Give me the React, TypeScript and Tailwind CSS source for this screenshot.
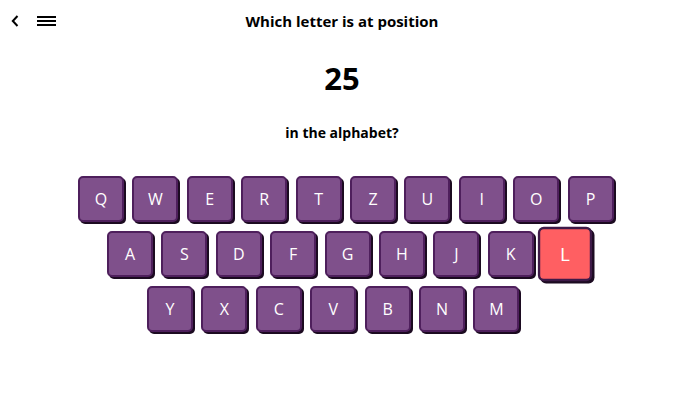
import React from "react";

const rows: { keys: string[]; ml: string }[] = [
  { keys: ["Q", "W", "E", "R", "T", "Z", "U", "I", "O", "P"], ml: "ml-[78px]" },
  { keys: ["A", "S", "D", "F", "G", "H", "J", "K", "L"], ml: "ml-[107px]" },
  { keys: ["Y", "X", "C", "V", "B", "N", "M"], ml: "ml-[147px]" },
];

function Key({ k }: { k: string }) {
  const active = k === "L";
  return (
    <div
      className={
        active
          ? "w-[46px] h-[46px] rounded-[5px] border-2 border-[#3e1a48] bg-[#ff5f62] shadow-[2px_2px_0_#1c0b21] flex items-center justify-center text-white text-[16px] scale-[1.18] relative z-10"
          : "w-[46px] h-[46px] rounded-[5px] border-2 border-[#4e1f5c] bg-[#7f508b] shadow-[2px_2px_0_#1c0b21] flex items-center justify-center text-white text-[16px]"
      }
    >
      {k}
    </div>
  );
}

export default function App() {
  return (
    <div className="w-[700px] h-[400px] bg-white relative font-['Open_Sans',sans-serif] text-black">
      <div className="absolute left-[11px] top-[15px] flex items-center gap-[18px]">
        <svg width="8" height="12" viewBox="0 0 8 12">
          <path d="M6.5 1 L1.8 6 L6.5 11" stroke="#000" strokeWidth="2" fill="none" />
        </svg>
        <svg width="19" height="12" viewBox="0 0 19 12">
          <rect x="0" y="1" width="19" height="2" fill="#000" />
          <rect x="0" y="5" width="19" height="2" fill="#000" />
          <rect x="0" y="9" width="19" height="2" fill="#000" />
        </svg>
      </div>
      <div className="flex flex-col items-center pr-[16px]">
        <div className="pt-[11px] h-[42px] text-[15px] font-bold leading-[20px]">Which letter is at position</div>
        <div className="mt-[16px] text-[31px] font-bold leading-[40px]">25</div>
        <div className="mt-[25px] text-[14px] font-bold leading-[20px]">in the alphabet?</div>
      </div>
      <div className="mt-[33px] flex flex-col gap-[9px]">
        {rows.map((r, i) => (
          <div key={i} className={"flex gap-[8.4px] " + r.ml}>
            {r.keys.map((k) => (
              <Key key={k} k={k} />
            ))}
          </div>
        ))}
      </div>
    </div>
  );
}
